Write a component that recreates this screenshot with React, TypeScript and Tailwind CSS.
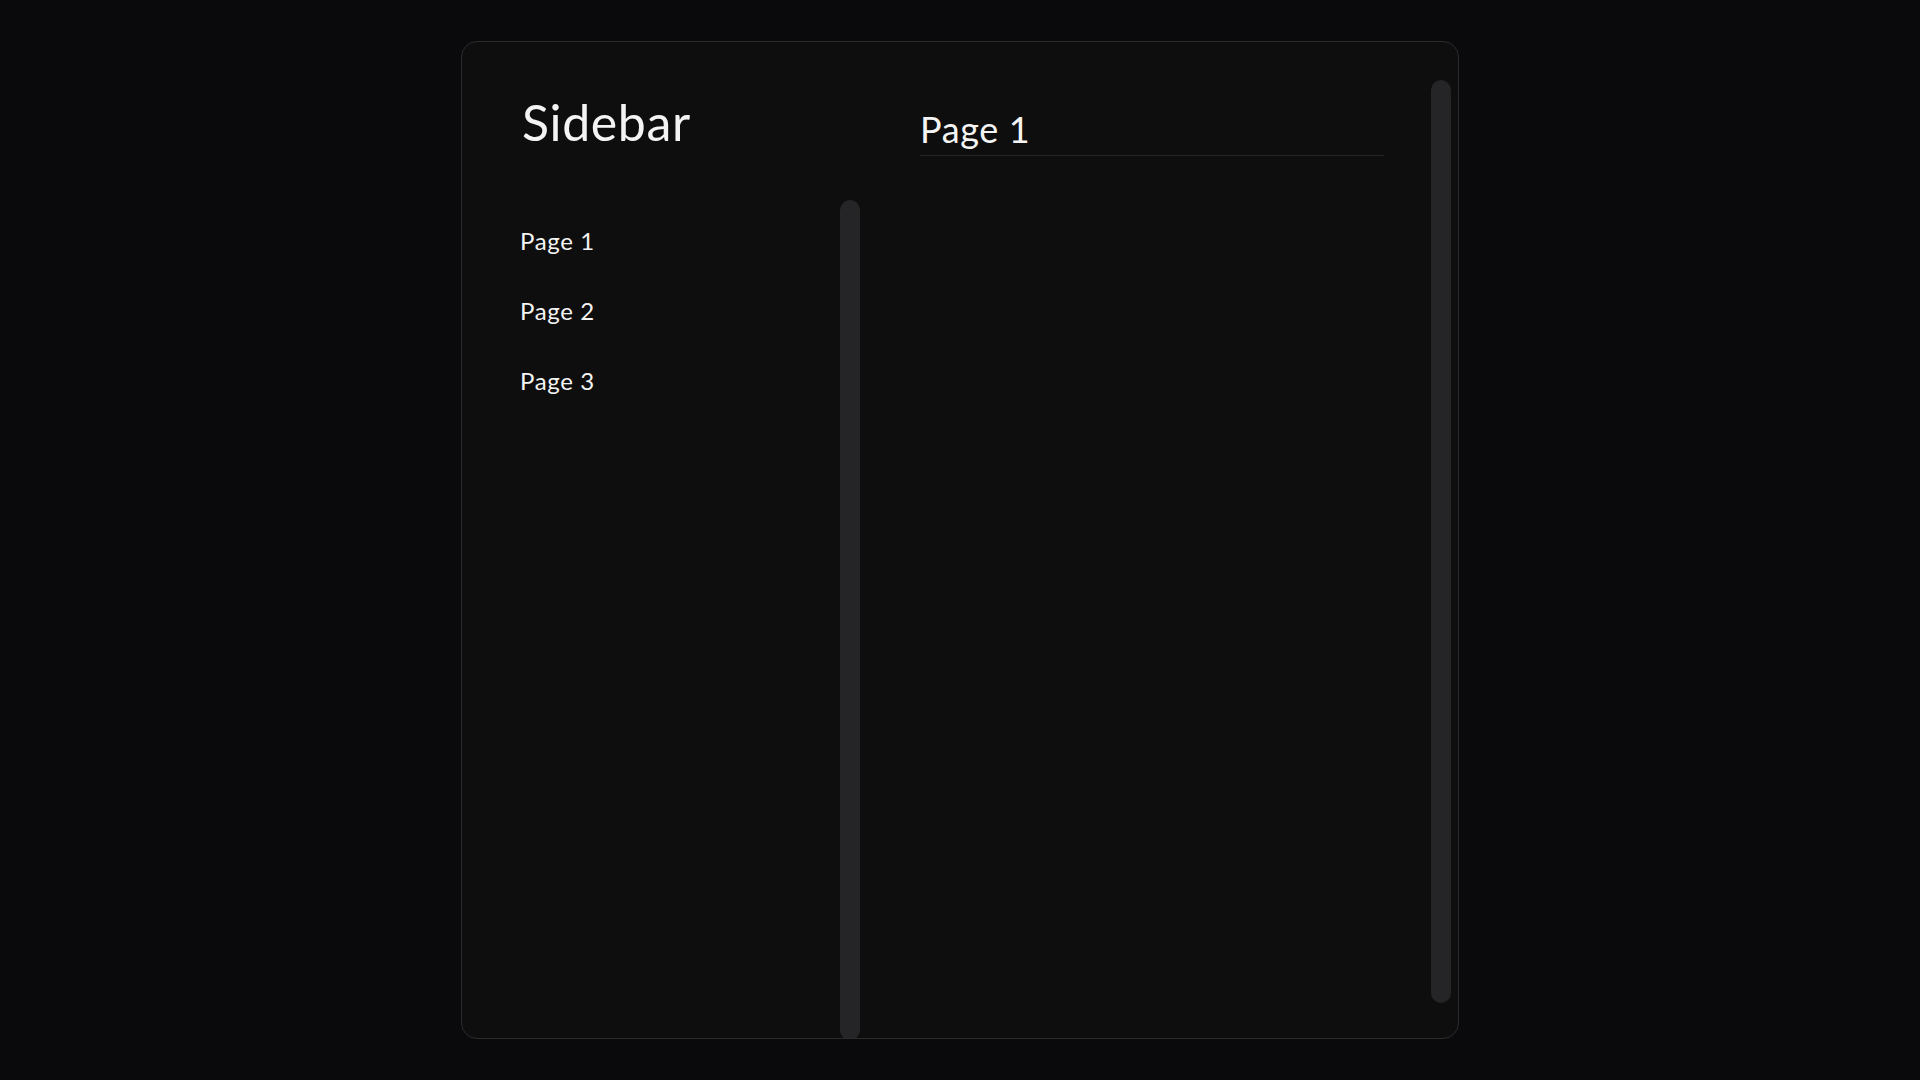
const pages = ["Page 1", "Page 2", "Page 3"];

function ScrollThumb({ className = "" }: { className?: string }) {
  return <div className={`w-5 shrink-0 rounded-full bg-[#252527] ${className}`} />;
}

export default function App() {
  return (
    <div className="flex min-h-screen items-center justify-center bg-[#0a0a0d] font-['Lato',sans-serif] tracking-[0.04em] text-[#f4f4f4]">
      <div className="flex h-[998px] w-[998px] overflow-hidden rounded-2xl border border-[#2c2c2f] bg-[#0e0e0e]">
        {/* sidebar */}
        <aside className="flex w-[398px] shrink-0 flex-col">
          <h1 className="pt-[55px] pl-[60px] text-[50px] leading-none">Sidebar</h1>
          <div className="mt-[53px] flex min-h-0 flex-1">
            <nav className="flex flex-1 flex-col pt-[6px] pl-[58px]">
              {pages.map((p) => (
                <a key={p} href="#" className="flex h-[70px] items-center text-[24px]">
                  {p}
                </a>
              ))}
            </nav>
            <ScrollThumb className="mb-[-2px]" />
          </div>
        </aside>

        {/* main content */}
        <main className="flex flex-1 pt-[38px] pr-[7px] pb-[35px]">
          <div className="flex-1 pt-[31px] pr-[47px] pl-[60px]">
            <h2 className="border-b border-[#232323] pb-[8px] text-[36px] leading-none">Page 1</h2>
          </div>
          <ScrollThumb />
        </main>
      </div>
    </div>
  );
}
